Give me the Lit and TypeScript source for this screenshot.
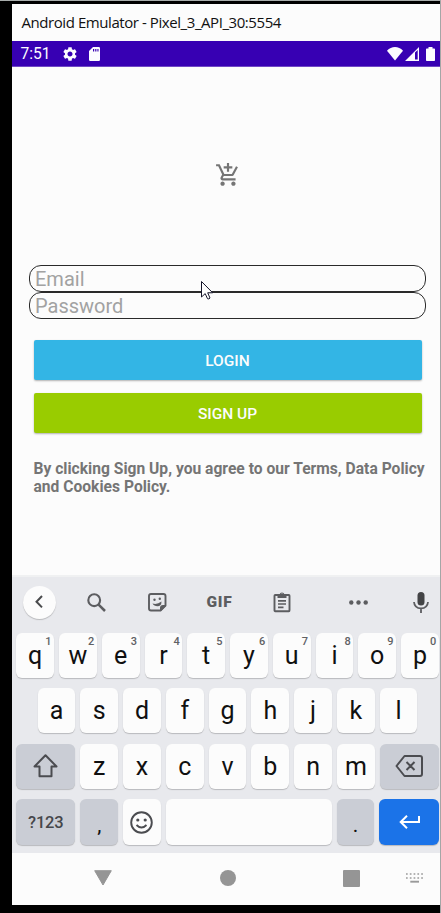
import { LitElement, html, css, svg } from "lit";
import { customElement, property } from "lit/decorators.js";

const icon = (box: string, w: number, h: number, body: unknown) =>
  html`<svg viewBox=${box} width=${w} height=${h} aria-hidden="true">${body}</svg>`;

const gear = svg`<path fill="currentColor" d="M19.14 12.94c.04-.3.06-.61.06-.94 0-.32-.02-.64-.07-.94l2.03-1.58c.18-.14.23-.41.12-.61l-1.92-3.32c-.12-.22-.37-.29-.59-.22l-2.39.96c-.5-.38-1.03-.7-1.62-.94l-.36-2.54c-.04-.24-.24-.41-.48-.41h-3.84c-.24 0-.43.17-.47.41l-.36 2.54c-.59.24-1.13.57-1.62.94l-2.39-.96c-.22-.08-.47 0-.59.22L2.74 8.87c-.12.21-.08.47.12.61l2.03 1.58c-.05.3-.09.63-.09.94s.02.64.07.94l-2.03 1.58c-.18.14-.23.41-.12.61l1.92 3.32c.12.22.37.29.59.22l2.39-.96c.5.38 1.03.7 1.62.94l.36 2.54c.05.24.24.41.48.41h3.84c.24 0 .44-.17.47-.41l.36-2.54c.59-.24 1.13-.56 1.62-.94l2.39.96c.22.08.47 0 .59-.22l1.92-3.32c.12-.22.07-.47-.12-.61l-2.01-1.58zM12 15.6c-1.98 0-3.6-1.62-3.6-3.6s1.62-3.6 3.6-3.6 3.6 1.62 3.6 3.6-1.62 3.6-3.6 3.6z"/>`;
const sdCard = svg`<path fill="currentColor" fill-rule="evenodd" d="M4 0H9.800Q11 0 11 1.200V12.800Q11 14 9.800 14H1.200Q0 14 0 12.800V4ZM4 2V4.500H5.200V2ZM6.200 2V4.500H7.400V2ZM8.400 2V4.500H9.500V2Z"/>`;
const wifi = svg`<path fill="currentColor" d="M8 13.500L0 3.700Q3.500 0 8 0T16 3.700Z"/>`;
const signal = svg`<path fill="currentColor" fill-rule="evenodd" d="M14 0V14H0ZM10 5.500V12.600H12.700V3Z"/>`;
const battery = svg`<path fill="currentColor" d="M2.500 1.500V0H6.500V1.500H8.200Q9 1.500 9 2.300V13.200Q9 14 8.200 14H.8Q0 14 0 13.200V2.300Q0 1.500.8 1.500Z"/>`;
const cart = svg`<path fill="currentColor" d="M11 9h2V6h3V4h-3V1h-2v3H8v2h3v3zm-4 9c-1.100 0-1.990.9-1.990 2S5.900 22 7 22s2-.9 2-2-.9-2-2-2zm10 0c-1.100 0-1.990.9-1.990 2s.89 2 1.990 2 2-.9 2-2-.9-2-2-2zm-9.830-3.250l.03-.12.9-1.630h7.450c.75 0 1.410-.41 1.750-1.030l3.860-7.010L19.420 4h-.01l-1.100 2-2.760 5H8.530l-.13-.27L6.160 6l-.95-2-.94-2H1v2h2l3.600 7.590-1.350 2.450c-.16.28-.25.61-.25.96 0 1.100.9 2 2 2h12v-2H7.420c-.13 0-.25-.11-.25-.25z"/>`;
const pointer = svg`<path fill="#fff" stroke="#15152a" stroke-width="1" d="M.5.500V16L4.200 12.600L6.500 17.700Q8 18.500 9 17L6.700 11.800H11.700Z"/>`;
const chevron = svg`<path fill="none" stroke="#4a4b4d" stroke-width="2" d="M7 1L1.500 6.700L7 12.400"/>`;
const search = svg`<g fill="none" stroke="#5c5d60"><circle cx="7.200" cy="7.200" r="5.900" stroke-width="2.100"/><path stroke-width="2.500" d="M11.600 11.600L18 18"/></g>`;
const sticker = svg`<path fill="none" stroke="#5c5d60" stroke-width="1.900" d="M3 1H15.500Q17.500 1 17.500 3V12.500L12.500 17.500H3Q1 17.500 1 15.500V3Q1 1 3 1Z"/><path fill="#5c5d60" d="M18 12V13L13 18H12V15Q12 12 15 12ZM4.500 10.500Q9 12 13.500 8.500Q13.500 13.300 9.500 13.300Q6 13.300 4.500 10.500Z"/><circle cx="6.500" cy="6.800" r="1.200" fill="#5c5d60"/><circle cx="11.800" cy="5.800" r="1.200" fill="#5c5d60"/>`;
const clipboard = svg`<path fill="none" stroke="#5c5d60" stroke-width="1.900" d="M2.200 3H15.800Q16.500 3 16.500 3.700V18.300Q16.500 19.200 15.800 19.200H2.200Q1.500 19.200 1.500 18.300V3.700Q1.500 3 2.200 3Z"/><path fill="#5c5d60" fill-rule="evenodd" d="M4.500 2.500H6.500A2.600 2.600 0 0 1 11.500 2.500H13.500V6H4.500ZM9 1.600A1 1 0 1 0 9 3.600A1 1 0 1 0 9 1.600Z"/><path stroke="#5c5d60" stroke-width="1.700" d="M5 8.800H13M5 12H13M5 15.300H10.500"/>`;
const dots = svg`<g fill="#5c5d60"><circle cx="2.300" cy="2.500" r="2.200"/><circle cx="9.500" cy="2.500" r="2.200"/><circle cx="16.700" cy="2.500" r="2.200"/></g>`;
const mic = svg`<rect x="4.500" y="0" width="7" height="13.500" rx="3.500" fill="#434446"/><path fill="none" stroke="#5c5d60" stroke-width="1.800" d="M1 10Q1.500 16.300 8 16.300T15 10M8 16V21"/>`;
const shift = svg`<path fill="none" stroke="#4b4c50" stroke-width="2" stroke-linejoin="round" d="M12.500 1.200L23.500 12.500H18.500V22.300H6.500V12.500H1.500Z"/>`;
const backspace = svg`<path fill="none" stroke="#4b4c50" stroke-width="2" stroke-linejoin="round" d="M9.500 1H25Q27 1 27 3V19Q27 21 25 21H9.500L1.500 11ZM11.500 7L19.500 15M19.500 7L11.500 15"/>`;
const smile = svg`<g fill="none" stroke="#4b4c50" stroke-width="1.900"><circle cx="11.500" cy="11.500" r="10.300"/><path d="M6.500 14Q11.500 19 16.500 14"/></g><circle cx="7.800" cy="9" r="1.600" fill="#4b4c50"/><circle cx="15.200" cy="9" r="1.600" fill="#4b4c50"/>`;
const enter = svg`<path fill="none" stroke="#fff" stroke-width="2" d="M20 1V7H2M8 .8L1.700 7L8 13.200"/>`;
const navBack = svg`<path fill="#959595" stroke="#959595" stroke-linejoin="round" d="M.7.700H17.300L9 15Z"/>`;
const navKeyboard = svg`<g stroke="#9a9a9a" stroke-width="1.700"><path stroke-dasharray="1.700 2.100" d="M0 1H17M0 5H17"/><path stroke-width="1.900" d="M4.300 8.700H13"/></g>`;

@customElement("key-cap")
export class KeyCap extends LitElement {
  @property() label = "";
  @property() hint = "";
  @property({ reflect: true }) tone = "light";

  static styles = css`
    :host {
      display: flex;
      align-items: center;
      justify-content: center;
      position: relative;
      box-sizing: border-box;
      min-width: 0;
      border-radius: 6px;
      background: #fcfcfc;
      box-shadow: 0 1px 1px #b9babd;
      font: 25px/29px Roboto, sans-serif;
      color: #101010;
    }
    :host([tone="dark"]) { background: #cacdd5; }
    :host([tone="blue"]) { background: #1b73e8; }
    :host([tone="symbols"]) { background: #cacdd5; font-size: 16.5px; color: #45464a; font-weight: 500; letter-spacing: -.2px; }
    :host([tone="mark"]) { background: #cacdd5; font-size: 21px; padding-top: 7px; }
    .hint {
      position: absolute;
      top: 3px;
      right: 2.500px;
      font: 500 11px/12px Roboto, sans-serif;
      color: #606164;
    }
  `;

  render() {
    return html`${this.label}<slot></slot>${this.hint ? html`<span class="hint">${this.hint}</span>` : null}`;
  }
}

@customElement("app-root")
export class AppRoot extends LitElement {
  static styles = css`
    :host {
      display: flex;
      flex-direction: column;
      box-sizing: border-box;
      width: 441px;
      height: 913px;
      padding: 3px 0 8px 12px;
      border-top: 1px solid #a8adac;
      border-right: 1px solid #a5a6a6;
      background: #000;
      overflow: hidden;
      font-family: Roboto, sans-serif;
    }
    svg { display: block; flex: none; overflow: visible; }
    .title {
      flex: none; height: 37px; padding-left: 9.500px; background: #fcfcfc;
      font: 15px/37px "Open Sans", "Noto Sans", sans-serif; letter-spacing: -.430px; color: #111; white-space: pre;
    }
    .status {
      flex: none; box-sizing: border-box; height: 26px; display: flex; align-items: center;
      padding: 1px 5px 0 8.500px; background: #3700b3; border-bottom: 1px solid #7048c5; color: #fcfcff;
    }
    .clock { width: 42.500px; font-size: 15.600px; line-height: 25px; padding-top: 1px; }
    .spacer { flex: 1; }
    .sd { margin-left: 12px; }
    .signal { margin-left: 2px; }
    .battery { margin-left: 7px; }
    .screen {
      flex: none; box-sizing: border-box; height: 510px; background: #fcfcfc; display: flex;
      flex-direction: column; padding: 95px 2px 0 17px; border-bottom: 2px solid #f0f1f2;
    }
    .cart { height: 103px; padding-left: 185.500px; color: #757575; }
    .fields { position: relative; width: 397px; }
    .field {
      box-sizing: border-box; height: 27px; border: 1px solid #2a2a2a; border-radius: 12px;
      padding-left: 5px; font-size: 20px; line-height: 27px; color: #a2a2a2;
    }
    .pointer { position: absolute; left: 172px; top: 16px; }
    .actions { display: flex; flex-direction: column; gap: 13px; padding: 21px 0 0 4.500px; width: 388px; }
    .action {
      height: 40px; border-radius: 2px; color: #fcfcfc; text-align: center;
      font-size: 15.500px; font-weight: 500; line-height: 42px; box-shadow: 0 1px 2px #0000004d;
    }
    .login { background: #33b5e5; }
    .signup { background: #99cc00; }
    .terms {
      margin: 27px 0 0 4.500px; font-size: 15.600px; line-height: 18px; font-weight: 700; color: #757575;
      letter-spacing: .010px; white-space: nowrap;
    }
    .keyboard { flex: none; height: 276px; background: #e8e9ed; }
    .tools { height: 56px; display: flex; align-items: center; padding-bottom: 6px; box-sizing: border-box; }
    .tool { flex: none; display: flex; justify-content: center; width: 61px; }
    .first { width: 54px; }
    .round {
      width: 33px; height: 33px; border-radius: 50%; background: #fcfcfc; box-shadow: 0 1px 1px #b9babd;
      display: flex; align-items: center; justify-content: center;
    }
    .gif { width: 63px; font-size: 15.500px; font-weight: 900; line-height: 18px; letter-spacing: .7px; color: #5c5d60; }
    .divider { width: 1px; height: 24px; margin-left: 8px; background: #d3d4d8; }
    .more { width: 77px; }
    .voice { width: 40px; margin-left: 4px; }
    .keys { display: flex; flex-direction: column; gap: 10.400px; width: 422.500px; padding-left: 4.300px; }
    .row { display: grid; column-gap: 5px; height: 45px; }
    .top { grid-template-columns: repeat(10, 1fr); }
    .home { grid-template-columns: repeat(9, 1fr); padding: 0 21.400px; }
    .lower { grid-template-columns: 59px repeat(7, 1fr) 59px; }
    .base { grid-template-columns: 59px 37.800px 37.800px 1fr 37.800px 59.500px; height: 46px; }
    .nav {
      flex: none; height: 50px; padding-bottom: 2px; background: #fcfcfc; display: flex; align-items: center; padding-left: 82px;
    }
    .home-dot { width: 16px; height: 16px; border-radius: 50%; background: #959595; margin-left: 107.500px; }
    .recent { width: 17px; height: 17px; border-radius: 1px; background: #959595; margin-left: 107.500px; }
    .ime { margin-left: 46px; }
  `;

  private letters(text: string, hints = "") {
    return [...text].map((c, i) => html`<key-cap label=${c} hint=${hints[i] ?? ""}></key-cap>`);
  }

  render() {
    return html`
      <div class="title">Android Emulator - Pixel_3_API_30:5554</div>
      <div class="status">
        <span class="clock">7:51</span>
        ${icon("2 2 20 20", 14, 14, gear)}
        <span class="sd">${icon("0 0 11 14", 11, 14, sdCard)}</span>
        <span class="spacer"></span>
        ${icon("0 0 16 14", 16, 14, wifi)}
        <span class="signal">${icon("0 0 14 14", 14, 14, signal)}</span>
        <span class="battery">${icon("0 0 9 14", 9, 14, battery)}</span>
      </div>
      <main class="screen">
        <div class="cart">${icon("0 0 24 24", 26, 26, cart)}</div>
        <div class="fields">
          <div class="field">Email</div>
          <div class="field">Password</div>
          <span class="pointer">${icon("0 0 13 19", 13, 19, pointer)}</span>
        </div>
        <div class="actions">
          <div class="action login">LOGIN</div>
          <div class="action signup">SIGN UP</div>
        </div>
        <div class="terms">By clicking Sign Up, you agree to our Terms, Data Policy<br />and Cookies Policy.</div>
      </main>
      <section class="keyboard">
        <div class="tools">
          <div class="tool first"><span class="round">${icon("0 0 8 13.400", 8, 13.4, chevron)}</span></div>
          <div class="tool">${icon("0 0 19 19", 19, 19, search)}</div>
          <div class="tool">${icon("0 0 18.500 18.500", 18.5, 18.5, sticker)}</div>
          <div class="tool gif">GIF</div>
          <div class="tool">${icon("0 0 18 20.500", 18, 20.5, clipboard)}</div>
          <span class="divider"></span>
          <div class="tool more">${icon("0 0 19 5", 19, 5, dots)}</div>
          <div class="tool voice">${icon("0 0 16 21", 16, 21, mic)}</div>
        </div>
        <div class="keys">
          <div class="row top">${this.letters("qwertyuiop", "1234567890")}</div>
          <div class="row home">${this.letters("asdfghjkl")}</div>
          <div class="row lower">
            <key-cap tone="dark">${icon("0 0 25 24", 25, 24, shift)}</key-cap>
            ${this.letters("zxcvbnm")}
            <key-cap tone="dark">${icon("0 0 28 22", 28, 22, backspace)}</key-cap>
          </div>
          <div class="row base">
            <key-cap tone="symbols" label="?123"></key-cap>
            <key-cap tone="mark" label=","></key-cap>
            <key-cap>${icon("0 0 23 23", 23, 23, smile)}</key-cap>
            <key-cap></key-cap>
            <key-cap tone="mark" label="."></key-cap>
            <key-cap tone="blue">${icon("0 0 21 14", 21, 14, enter)}</key-cap>
          </div>
        </div>
      </section>
      <div class="nav">
        ${icon("0 0 18 16", 18, 16, navBack)}
        <span class="home-dot"></span>
        <span class="recent"></span>
        <span class="ime">${icon("0 0 17 10", 17, 10, navKeyboard)}</span>
      </div>
    `;
  }
}
